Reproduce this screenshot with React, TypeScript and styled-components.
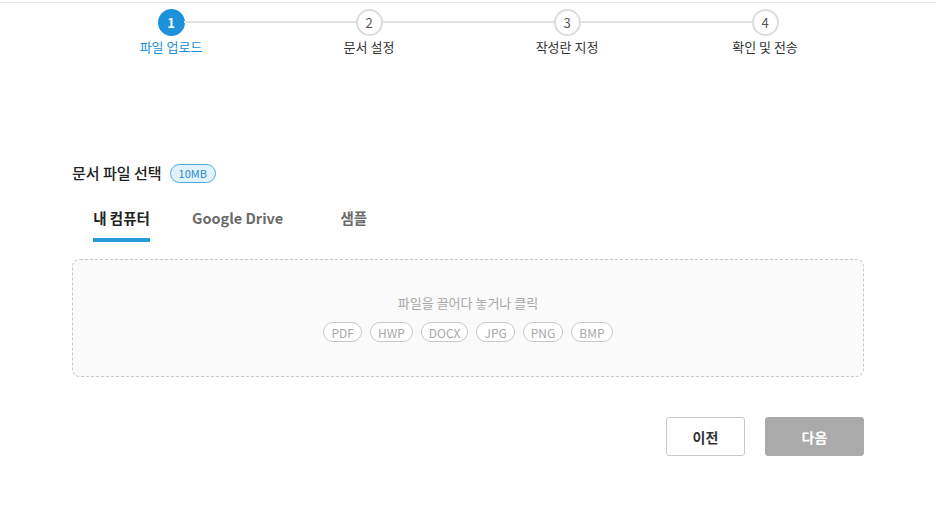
import React, { useState } from "react";
import styled, { createGlobalStyle, css } from "styled-components";

const GlobalStyle = createGlobalStyle`
  html, body { margin: 0; padding: 0; background: #fff; }
  body { font-family: "Noto Sans CJK KR", "Noto Sans", sans-serif; color: #222; }
  * { box-sizing: border-box; }
`;

const Page = styled.div`
  width: 936px;
  min-height: 527px;
  padding-top: 2px;
`;

const TopRule = styled.div`
  height: 1px;
  background: #e8e8e8;
`;

const Container = styled.div`
  width: 792px;
  margin: 0 auto;
`;

const Steps = styled.ol`
  list-style: none;
  margin: 6px 0 0;
  padding: 0;
  display: grid;
  grid-template-columns: repeat(4, 1fr);
`;

const Step = styled.li<{ $last?: boolean }>`
  position: relative;
  display: flex;
  flex-direction: column;
  align-items: center;
  ${(p) =>
    !p.$last &&
    css`
      &::after {
        content: "";
        position: absolute;
        top: 12px;
        left: calc(50% + 13px);
        width: calc(100% - 26px);
        height: 2px;
        background: #e2e2e2;
      }
    `}
`;

const Circle = styled.span<{ $active?: boolean }>`
  width: 27px;
  height: 27px;
  border-radius: 50%;
  display: flex;
  align-items: center;
  justify-content: center;
  font-size: 13px;
  font-weight: ${(p) => (p.$active ? 700 : 400)};
  color: ${(p) => (p.$active ? "#fff" : "#555")};
  background: ${(p) => (p.$active ? "#1d92db" : "#fff")};
  border: 2px solid ${(p) => (p.$active ? "#1d92db" : "#dcdcdc")};
`;

const StepLabel = styled.span<{ $active?: boolean }>`
  margin-top: 2px;
  font-size: 13px;
  line-height: 18px;
  color: ${(p) => (p.$active ? "#1d8fd6" : "#333")};
`;

const TitleRow = styled.div`
  margin-top: 106px;
  display: flex;
  align-items: center;
  gap: 8px;
`;

const Title = styled.h2`
  margin: 0;
  font-size: 15px;
  line-height: 22px;
  font-weight: 500;
  color: #222;
`;

const Badge = styled.span`
  height: 19px;
  padding: 0 8px;
  border-radius: 10px;
  border: 1px solid #4fa9dd;
  background: #e2f2fb;
  color: #2a8bcb;
  font-size: 11px;
  display: flex;
  align-items: center;
`;

const Tabs = styled.div`
  margin-top: 23px;
  display: flex;
`;

const Tab = styled.button`
  min-width: 99px;
  padding: 0 21px;
  border: none;
  background: none;
  font-family: inherit;
  cursor: pointer;
  display: flex;
  justify-content: center;
`;

const TabText = styled.span<{ $active?: boolean }>`
  font-size: 14.5px;
  line-height: 22px;
  font-weight: 700;
  color: ${(p) => (p.$active ? "#222" : "#6a6a6a")};
  padding-bottom: 9px;
  border-bottom: 4px solid ${(p) => (p.$active ? "#2699d9" : "transparent")};
`;

const DropZone = styled.div`
  margin-top: 17px;
  height: 118px;
  border: 1px dashed #c8c8c8;
  border-radius: 8px;
  background: #fafafa;
  display: flex;
  flex-direction: column;
  align-items: center;
  padding-top: 33px;
`;

const DropText = styled.p`
  margin: 0;
  font-size: 13px;
  line-height: 20px;
  color: #a8a8a8;
`;

const Chips = styled.div`
  margin-top: 9px;
  display: flex;
  gap: 8px;
`;

const Chip = styled.span`
  height: 20px;
  padding: 0 7px;
  border: 1px solid #c8c8c8;
  border-radius: 10px;
  font-size: 12px;
  color: #a8a8a8;
  display: flex;
  align-items: center;
  background: #fff;
`;

const Actions = styled.div`
  margin-top: 40px;
  display: flex;
  justify-content: flex-end;
  gap: 20px;
`;

const Button = styled.button<{ $primary?: boolean }>`
  height: 39px;
  width: ${(p) => (p.$primary ? "99px" : "79px")};
  border-radius: 3px;
  font-family: inherit;
  font-size: 14px;
  font-weight: 700;
  border: 1px solid ${(p) => (p.$primary ? "#aaaaaa" : "#c9c9c9")};
  background: ${(p) => (p.$primary ? "#aaaaaa" : "#fff")};
  color: ${(p) => (p.$primary ? "#fff" : "#333")};
`;

const steps = ["파일 업로드", "문서 설정", "작성란 지정", "확인 및 전송"];
const tabs = ["내 컴퓨터", "Google Drive", "샘플"];
const types = ["PDF", "HWP", "DOCX", "JPG", "PNG", "BMP"];

export default function App() {
  const [tab, setTab] = useState(0);
  return (
    <Page>
      <GlobalStyle />
      <TopRule />
      <Container>
        <Steps>
          {steps.map((s, i) => (
            <Step key={s} $last={i === steps.length - 1}>
              <Circle $active={i === 0}>{i + 1}</Circle>
              <StepLabel $active={i === 0}>{s}</StepLabel>
            </Step>
          ))}
        </Steps>
        <TitleRow>
          <Title>문서 파일 선택</Title>
          <Badge>10MB</Badge>
        </TitleRow>
        <Tabs>
          {tabs.map((t, i) => (
            <Tab key={t} onClick={() => setTab(i)}>
              <TabText $active={tab === i}>{t}</TabText>
            </Tab>
          ))}
        </Tabs>
        <DropZone>
          <DropText>파일을 끌어다 놓거나 클릭</DropText>
          <Chips>
            {types.map((t) => (
              <Chip key={t}>{t}</Chip>
            ))}
          </Chips>
        </DropZone>
        <Actions>
          <Button>이전</Button>
          <Button $primary>다음</Button>
        </Actions>
      </Container>
    </Page>
  );
}
